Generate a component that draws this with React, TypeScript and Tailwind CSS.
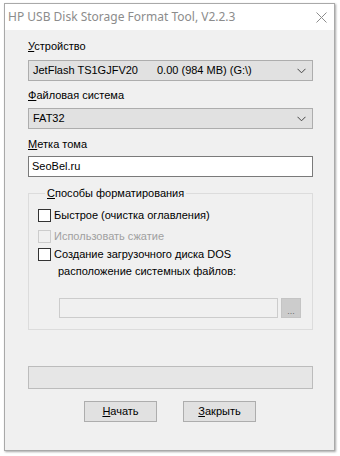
import React from 'react';

const ui = { fontFamily: '"Liberation Sans", Arial, sans-serif' };

function Chevron() {
  return (
    <svg width="9" height="6" viewBox="0 0 9 6" className="shrink-0">
      <path d="M0.5 0.8 L4.5 4.8 L8.5 0.8" fill="none" stroke="#444" strokeWidth="1" />
    </svg>
  );
}

function Combo({ children }: { children: React.ReactNode }) {
  return (
    <div className="h-[21px] w-[285px] flex items-center justify-between pl-[4px] pr-[6px] bg-[#e1e1e1] border border-[#adadad] text-[11px] text-black">
      <div className="flex items-center">{children}</div>
      <Chevron />
    </div>
  );
}

function Check({ label, disabled }: { label: string; disabled?: boolean }) {
  return (
    <div className="h-[13px] flex items-center gap-[3px]">
      <span
        className={`w-[13px] h-[13px] shrink-0 border ${disabled ? 'border-[#cccccc] bg-[#f0f0f0]' : 'border-[#333333] bg-white'}`}
      />
      <span className={`text-[11px] leading-[13px] ${disabled ? 'text-[#a0a0a0]' : 'text-black'}`}>{label}</span>
    </div>
  );
}

export default function App() {
  return (
    <div className="w-[340px] h-[456px] bg-white pt-[3px] pl-[4px] overflow-hidden" style={ui}>
      <div className="w-[331px] h-[448px] flex flex-col border border-[#a9a9a9] shadow-[1px_1px_2px_rgba(0,0,0,0.35)]">
        {/* title bar */}
        <div className="h-[26px] shrink-0 bg-white flex items-center justify-between pl-[3px] pr-[7px]">
          <span className="text-[12px] text-[#8c8c8c]" style={{ fontFamily: '"Noto Sans", "Liberation Sans", sans-serif' }}>
            HP USB Disk Storage Format Tool, V2.2.3
          </span>
          <svg width="11" height="11" viewBox="0 0 11 11">
            <path d="M0.5 0.5 L10.5 10.5 M10.5 0.5 L0.5 10.5" stroke="#8c8c8c" strokeWidth="1" />
          </svg>
        </div>

        {/* body */}
        <div className="flex-1 bg-[#f0f0f0] pl-[23px] pt-[10px] flex flex-col text-[11px] leading-[13px] text-black">
          <div><span className="underline">У</span>стройство</div>
          <div className="mt-[7px]">
            <Combo>
              <span className="w-[124px]">JetFlash TS1GJFV20</span>
              <span>0.00 (984 MB) (G:\)</span>
            </Combo>
          </div>

          <div className="mt-[8px]"><span className="underline">Ф</span>айловая система</div>
          <div className="mt-[6px]">
            <Combo>
              <span>FAT32</span>
            </Combo>
          </div>

          <div className="mt-[9px]"><span className="underline">М</span>етка тома</div>
          <div className="mt-[5px] h-[21px] w-[285px] bg-white border border-[#7a7a7a] flex items-center pl-[3px]">
            SeoBel.ru
          </div>

          <fieldset className="mt-[10px] w-[285px] h-[143px] border border-[#dcdcdc] pl-[9px] pr-[10px]">
            <legend className="ml-[7px] px-[2px]"><span className="underline">С</span>пособы форматирования</legend>
            <div className="flex flex-col mt-[9px]">
              <Check label="Быстрое (очистка оглавления)" />
              <div className="mt-[8px]">
                <Check label="Использовать сжатие" disabled />
              </div>
              <div className="mt-[5px]">
                <Check label="Создание загрузочного диска DOS" />
              </div>
              <div className="mt-[4px] pl-[20px]">расположение системных файлов:</div>
              <div className="mt-[20px] ml-[21px] flex items-center gap-[3px]">
                <div className="h-[20px] w-[219px] bg-[#f0f0f0] border border-[#cccccc]" />
                <div className="h-[20px] w-[20px] bg-[#cccccc] border border-[#c4c4c4] flex items-end justify-center text-[9px] leading-[12px] text-[#6d6d6d]">
                  ...
                </div>
              </div>
            </div>
          </fieldset>

          <div className="mt-[36px] h-[23px] w-[285px] bg-[#e6e6e6] border border-[#bcbcbc]" />

          <div className="mt-[12px] flex gap-[26px] pl-[56px]">
            <div className="h-[21px] w-[73px] bg-[#e1e1e1] border border-[#adadad] flex items-center justify-center">
              <span><span className="underline">Н</span>ачать</span>
            </div>
            <div className="h-[21px] w-[73px] bg-[#e1e1e1] border border-[#adadad] flex items-center justify-center">
              <span><span className="underline">З</span>акрыть</span>
            </div>
          </div>
        </div>
      </div>
    </div>
  );
}
